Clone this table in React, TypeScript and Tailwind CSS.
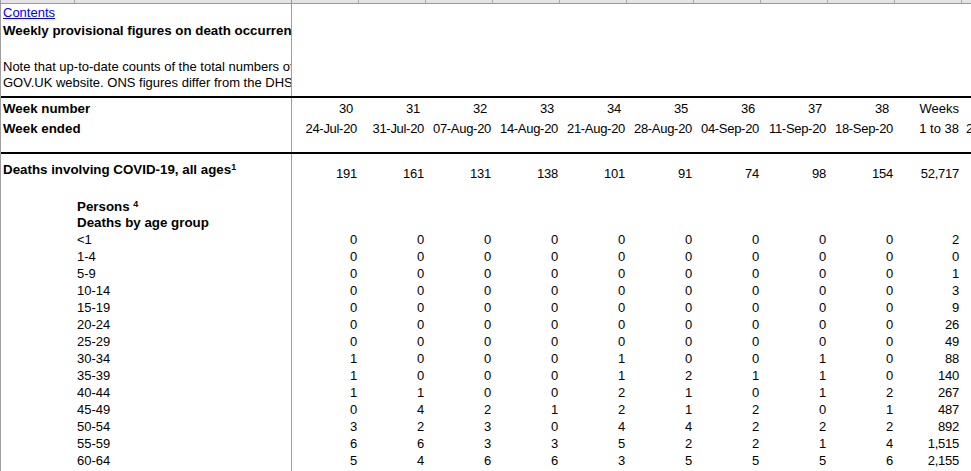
import React from 'react';

const weeks = ['30', '31', '32', '33', '34', '35', '36', '37', '38'];
const dates = ['24-Jul-20', '31-Jul-20', '07-Aug-20', '14-Aug-20', '21-Aug-20', '28-Aug-20', '04-Sep-20', '11-Sep-20', '18-Sep-20'];
const allAges = ['191', '161', '131', '138', '101', '91', '74', '98', '154', '52,717'];

const ageRows: [string, string[]][] = [
  ['<1', ['0', '0', '0', '0', '0', '0', '0', '0', '0', '2']],
  ['1-4', ['0', '0', '0', '0', '0', '0', '0', '0', '0', '0']],
  ['5-9', ['0', '0', '0', '0', '0', '0', '0', '0', '0', '1']],
  ['10-14', ['0', '0', '0', '0', '0', '0', '0', '0', '0', '3']],
  ['15-19', ['0', '0', '0', '0', '0', '0', '0', '0', '0', '9']],
  ['20-24', ['0', '0', '0', '0', '0', '0', '0', '0', '0', '26']],
  ['25-29', ['0', '0', '0', '0', '0', '0', '0', '0', '0', '49']],
  ['30-34', ['1', '0', '0', '0', '1', '0', '0', '1', '0', '88']],
  ['35-39', ['1', '0', '0', '0', '1', '2', '1', '1', '0', '140']],
  ['40-44', ['1', '1', '0', '0', '2', '1', '0', '1', '2', '267']],
  ['45-49', ['0', '4', '2', '1', '2', '1', '2', '0', '1', '487']],
  ['50-54', ['3', '2', '3', '0', '4', '4', '2', '2', '2', '892']],
  ['55-59', ['6', '6', '3', '3', '5', '2', '2', '1', '4', '1,515']],
  ['60-64', ['5', '4', '6', '6', '3', '5', '5', '5', '6', '2,155']],
];

// one sheet row: frozen left pane (cols A+B) then the weekly columns
const Row = ({ h, label, children }: { h: string; label?: React.ReactNode; children?: React.ReactNode }) => (
  <div className={`flex items-end ${h}`}>
    <div className="w-[291px] shrink-0 self-stretch flex items-end border-r border-[#9e9e9e] overflow-hidden whitespace-nowrap">
      {label}
    </div>
    {children}
  </div>
);

const Cells = ({ values }: { values: string[] }) => (
  <>
    {values.map((v, i) => (
      <div
        key={i}
        className={
          i === 9
            ? 'w-[67px] shrink-0 text-right pr-[3px] tracking-[-0.25px]'
            : 'w-[67px] shrink-0 text-right pr-[2px] tracking-[-0.25px]'
        }
      >
        {v}
      </div>
    ))}
  </>
);

export default function App() {
  return (
    <div className="w-[971px] h-[471px] overflow-hidden bg-white text-black text-[13px] leading-[17px] font-['Liberation_Sans',Arial,sans-serif]">
      <div className="w-[1100px] border-l border-[#9e9e9e] h-full">
        {/* column header strip, mostly scrolled away */}
        <div className="flex h-[4px] bg-[#e4e4e4] border-b border-[#9a9a9a]">
          <div className="w-[74px] shrink-0 border-r border-[#ababab]" />
          <div className="w-[217px] shrink-0 border-r border-[#9e9e9e]" />
          {Array.from({ length: 11 }).map((_, i) => (
            <div key={i} className="w-[67px] shrink-0 border-r border-[#ababab]" />
          ))}
        </div>

        <Row h="h-[17px]" label={<a className="pl-[2px] text-[#0000ff] underline">Contents</a>} />
        <Row
          h="h-[18px]"
          label={<span className="pl-[2px] font-bold text-[13.33px]">Weekly provisional figures on death occurrences in England and Wales</span>}
        />
        <Row h="h-[19px]" />
        <Row
          h="h-[17px]"
          label={<span className="pl-[2px]">Note that up-to-date counts of the total numbers of deaths involving coronavirus (COVID-19) are published on the</span>}
        />
        <Row
          h="h-[16px]"
          label={<span className="pl-[2px]">GOV.UK website. ONS figures differ from the DHSC figures as they are based on death registrations</span>}
        />
        <Row h="h-[5px]" />
        <div className="h-[2px] bg-black" />

        <Row h="h-[19px]" label={<span className="pl-[2px] font-bold text-[13.33px]">Week number</span>}>
          {weeks.map((w) => (
            <div key={w} className="w-[67px] shrink-0 text-right pr-[6px] tracking-[-0.25px]">{w}</div>
          ))}
          <div className="w-[67px] shrink-0 text-right pr-[3px]">Weeks</div>
        </Row>
        <Row h="h-[20px]" label={<span className="pl-[2px] font-bold text-[13.33px]">Week ended</span>}>
          {dates.map((d) => (
            <div key={d} className="w-[67px] shrink-0 text-right pr-[2px] tracking-[-0.3px]">{d}</div>
          ))}
          <div className="w-[67px] shrink-0 text-right pr-[3px]">1 to 38</div>
          <div className="w-[67px] shrink-0 pl-[4px]">2020</div>
        </Row>
        <Row h="h-[15px]" />
        <div className="h-[2px] bg-black" />

        <Row
          h="h-[28px]"
          label={
            <span className="pl-[2px] mb-[4px] font-bold text-[13.33px]">
              Deaths involving COVID-19, all ages<sup className="text-[9px]">1</sup>
            </span>
          }
        >
          <Cells values={allAges} />
        </Row>
        <Row h="h-[16px]" />
        <Row
          h="h-[17px]"
          label={
            <span className="pl-[76px] font-bold text-[13.33px]">
              Persons <sup className="text-[9px]">4</sup>
            </span>
          }
        />
        <Row h="h-[16px]" label={<span className="pl-[76px] font-bold text-[13.33px]">Deaths by age group</span>} />
        {ageRows.map(([age, vals]) => (
          <Row key={age} h="h-[17px]" label={<span className="pl-[76px]">{age}</span>}>
            <Cells values={vals} />
          </Row>
        ))}
        <Row h="h-[17px]" />
      </div>
    </div>
  );
}
